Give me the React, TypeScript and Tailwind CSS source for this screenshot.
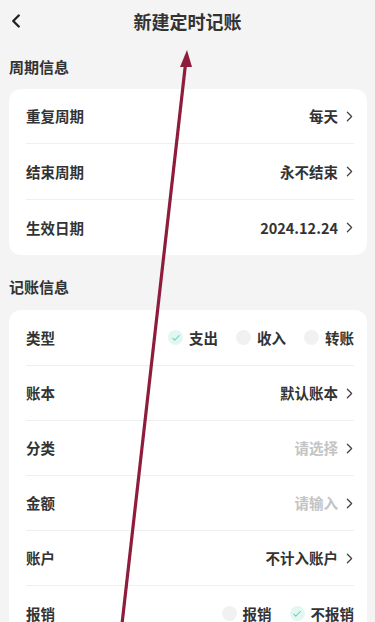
import { ChevronLeft, ChevronRight, Check } from "lucide-react";

const font = { fontFamily: '"Noto Sans CJK SC", "Noto Sans", sans-serif' };

function Row({
  label,
  value,
  placeholder,
  last,
  tall,
}: {
  label: string;
  value: string;
  placeholder?: boolean;
  last?: boolean;
  tall?: boolean;
}) {
  return (
    <div
      className={`flex items-center pt-[1px] ${tall ? "h-[55.5px]" : "h-[55px]"} ${last ? "" : "border-b border-[#efefef]"}`}
    >
      <span className="text-[14.5px] font-semibold text-[#333]">{label}</span>
      <span
        className={`ml-auto text-[14.5px] font-semibold ${placeholder ? "text-[#c4c4c4]" : "text-[#333]"}`}
      >
        {value}
      </span>
      <ChevronRight className="ml-[3px] mr-[-4px] text-[#444]" size={17} strokeWidth={1.8} />
    </div>
  );
}

function Radio({ label, checked }: { label: string; checked?: boolean }) {
  return (
    <div className="flex items-center gap-[6px]">
      <span
        className={`grid h-[15px] w-[15px] place-items-center rounded-full ${checked ? "bg-[#e3f7f2]" : "bg-[#f1f1f1]"}`}
      >
        {checked && <Check size={10} strokeWidth={2.5} className="text-[#6fcdb4]" />}
      </span>
      <span className="text-[14.5px] font-semibold text-[#333]">{label}</span>
    </div>
  );
}

export default function App() {
  return (
    <div className="relative h-[622px] w-[375px] overflow-hidden bg-[#f4f4f4]" style={font}>
      <header className="relative flex h-[42px] items-center justify-center">
        <ChevronLeft className="absolute left-[5px] top-[10px] text-[#222]" size={22} strokeWidth={2.6} />
        <h1 className="text-[18px] font-semibold text-[#333]">新建定时记账</h1>
      </header>

      <div className="px-[9px] pt-[14px] pb-[10px] text-[15px] font-semibold text-[#333]">周期信息</div>
      <div className="ml-[9px] mr-[8px] rounded-[12px] bg-white pl-[17px] pr-[13px]">
        <Row label="重复周期" value="每天" tall />
        <Row label="结束周期" value="永不结束" tall />
        <Row label="生效日期" value="2024.12.24" tall last />
      </div>

      <div className="px-[9px] pt-[21px] pb-[11px] text-[15px] font-semibold text-[#333]">记账信息</div>
      <div className="ml-[9px] mr-[8px] rounded-[12px] bg-white pl-[17px] pr-[13px]">
        <div className="flex h-[56px] items-center border-b border-[#efefef] pt-[1px]">
          <span className="text-[14.5px] font-semibold text-[#333]">类型</span>
          <div className="ml-auto flex items-center gap-[18px]">
            <Radio label="支出" checked />
            <Radio label="收入" />
            <Radio label="转账" />
          </div>
        </div>
        <Row label="账本" value="默认账本" />
        <Row label="分类" value="请选择" placeholder />
        <Row label="金额" value="请输入" placeholder />
        <Row label="账户" value="不计入账户" />
        <div className="flex h-[55px] items-center pt-[1px]">
          <span className="text-[14.5px] font-semibold text-[#333]">报销</span>
          <div className="ml-auto flex items-center gap-[18px]">
            <Radio label="报销" />
            <Radio label="不报销" checked />
          </div>
        </div>
      </div>

      <svg className="pointer-events-none absolute inset-0" width="375" height="622" viewBox="0 0 375 622">
        <line x1="122" y1="624" x2="185.5" y2="64" stroke="#8e1d3d" strokeWidth="3.2" />
        <polygon points="187,50 180,67 192,67" fill="#8e1d3d" />
      </svg>
    </div>
  );
}
